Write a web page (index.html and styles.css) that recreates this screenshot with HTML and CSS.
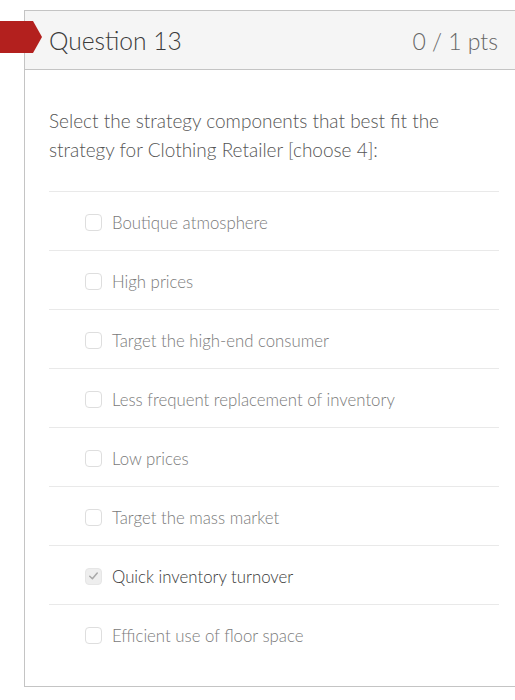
FILE: index.html
```html
<!DOCTYPE html>
<html>
<head>
<meta charset="utf-8">
<link rel="stylesheet" href="styles.css">
</head>
<body>
<div class="page">
  <div class="flag"></div>
  <div class="card">
    <div class="card-header">
      <h2 class="title">Question 13</h2>
      <span class="pts">0 / 1 pts</span>
    </div>
    <div class="card-body">
      <p class="prompt">Select the strategy components that best fit the strategy for Clothing Retailer [choose 4]:</p>
      <ul class="answers">
        <li class="answer"><span class="box"></span><span class="label">Boutique atmosphere</span></li>
        <li class="answer"><span class="box"></span><span class="label">High prices</span></li>
        <li class="answer"><span class="box"></span><span class="label">Target the high-end consumer</span></li>
        <li class="answer"><span class="box"></span><span class="label">Less frequent replacement of inventory</span></li>
        <li class="answer"><span class="box"></span><span class="label">Low prices</span></li>
        <li class="answer"><span class="box"></span><span class="label">Target the mass market</span></li>
        <li class="answer checked"><span class="box"><svg viewBox="0 0 16 16" width="16" height="16"><path d="M4 8.3 L6.8 11 L12 4.8" fill="none" stroke="#a8a8a8" stroke-width="1.6" stroke-linecap="round" stroke-linejoin="round"/></svg></span><span class="label">Quick inventory turnover</span></li>
        <li class="answer"><span class="box"></span><span class="label">Efficient use of floor space</span></li>
      </ul>
    </div>
  </div>
</div>
</body>
</html>
```

FILE: styles.css
```css
html, body {
  margin: 0;
  padding: 0;
  background: #ffffff;
}

body {
  font-family: Lato, "Open Sans", sans-serif;
}

.page {
  position: relative;
  padding-top: 10px;
  padding-left: 24px;
}

.flag {
  position: absolute;
  left: 0;
  top: 21px;
  width: 42px;
  height: 32px;
  background: #b3201e;
  clip-path: polygon(0 0, 33px 0, 42px 16px, 33px 32px, 0 32px);
}

.card {
  border: 1px solid #c4c4c4;
  border-right: none;
}

.card-header {
  display: flex;
  align-items: center;
  justify-content: space-between;
  height: 59px;
  padding-top: 1px;
  box-sizing: border-box;
  background: #f5f5f5;
  border-bottom: 1px solid #c4c4c4;
  padding-left: 24px;
  padding-right: 17px;
}

.title {
  margin: 0;
  font-weight: 300;
  font-size: 24.6px;
  color: #3b3b3b;
}

.pts {
  font-weight: 300;
  font-size: 23px;
  color: #666666;
}

.card-body {
  padding: 36px 16px 22px 24px;
}

.prompt {
  margin: 0;
  font-weight: 300;
  font-size: 19px;
  line-height: 29px;
  color: #555555;
  padding-bottom: 27px;
  border-bottom: 1px solid #e9e9e9;
}

.answers {
  list-style: none;
  margin: 0;
  padding: 0;
}

.answer {
  display: flex;
  align-items: center;
  height: 59px;
  padding-top: 2px;
  box-sizing: border-box;
  padding-left: 36px;
  border-bottom: 1px solid #e9e9e9;
}

.answer:last-child {
  border-bottom: none;
}

.box {
  width: 15px;
  height: 15px;
  border: 1px solid #dedede;
  border-radius: 4px;
  background: #ffffff;
  margin-right: 10px;
  display: flex;
  align-items: center;
  justify-content: center;
}

.checked .box {
  background: #eeeeee;
  border-color: #e6e6e6;
}

.label {
  font-weight: 300;
  font-size: 16.8px;
  color: #7a7a7a;
}

.checked .label {
  color: #3a3a3a;
}
```
